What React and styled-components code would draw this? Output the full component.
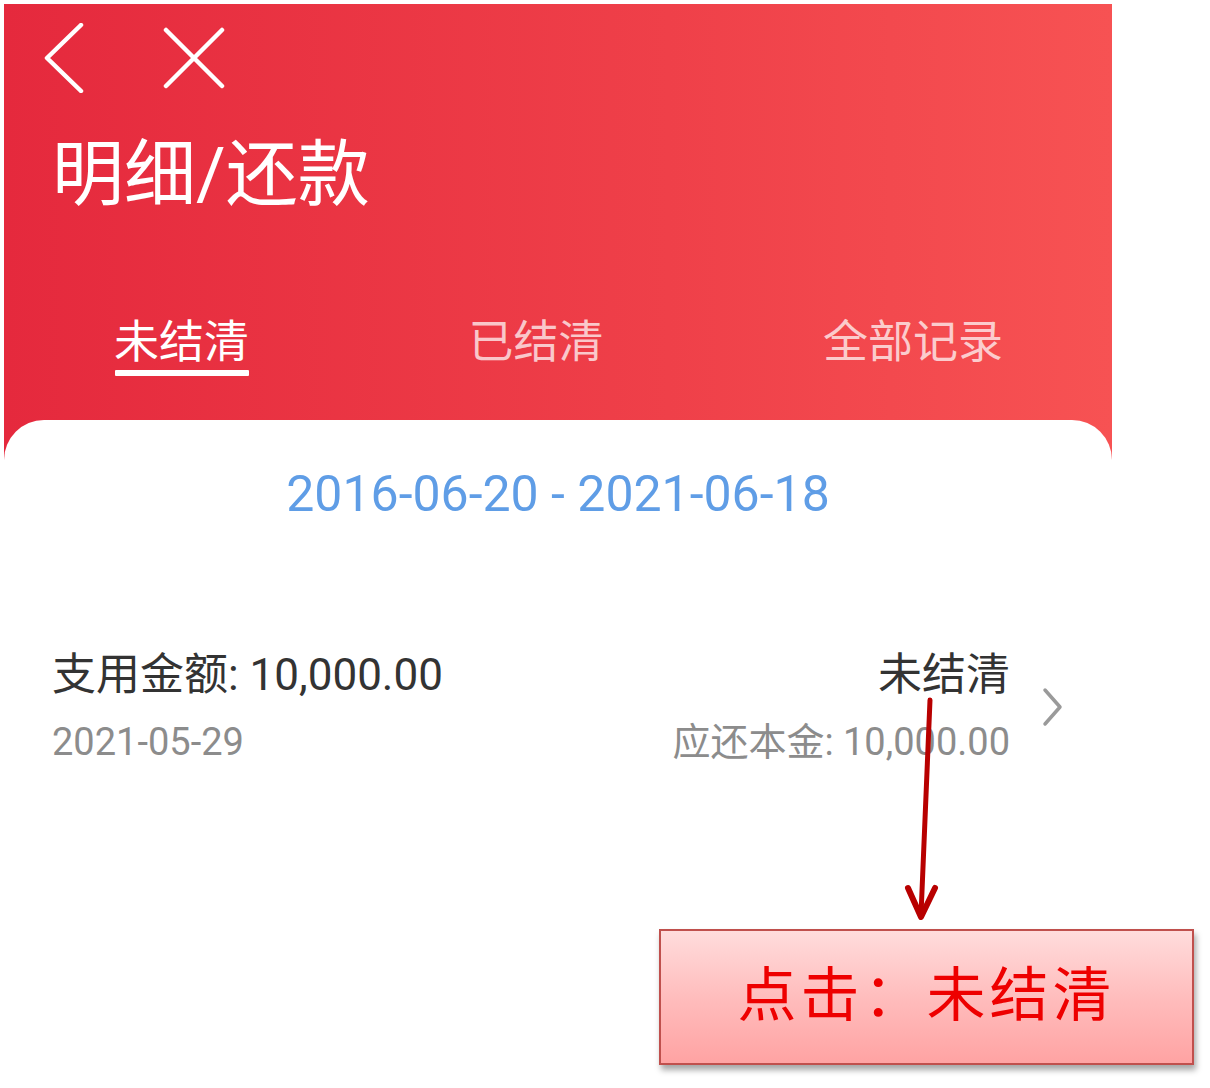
import React from 'react'
import styled, { createGlobalStyle } from 'styled-components'

const GlobalStyle = createGlobalStyle`
  html, body {
    margin: 0;
    padding: 0;
    background: #fff;
  }
  body {
    font-family: Roboto, "Noto Sans CJK SC", sans-serif;
  }
`

const Page = styled.div`
  position: relative;
  width: 1210px;
  min-height: 1088px;
  padding: 4px;
  box-sizing: border-box;
  background: #fff;
`

const Screen = styled.div`
  width: 1108px;
  display: flex;
  flex-direction: column;
`

const Header = styled.header`
  display: flex;
  flex-direction: column;
  background: linear-gradient(90deg, #e5293d 0%, #ef4049 60%, #f75253 100%);
  padding: 20px 0 85px;
`

const NavBar = styled.div`
  display: flex;
  align-items: center;
  gap: 78px;
  padding-left: 39px;
  height: 68px;
`

const IconButton = styled.button`
  display: flex;
  padding: 0;
  border: 0;
  background: none;
  cursor: pointer;
`

const Title = styled.h1`
  margin: 47px 0 0 48px;
  font-size: 72px;
  line-height: 72px;
  font-weight: 400;
  color: #fff;
`

const Tabs = styled.nav`
  display: flex;
  justify-content: space-between;
  padding: 0 109px 0 110px;
  margin-top: 109px;
`

const Tab = styled.div`
  display: flex;
  flex-direction: column;
  align-items: center;
  font-size: 45px;
  line-height: 45px;
  color: ${p => (p.$active ? '#fff' : 'rgba(255,255,255,0.72)')};
  cursor: pointer;

  &::after {
    content: '';
    display: block;
    width: 134px;
    height: 6px;
    margin-top: 5px;
    border-radius: 1px;
    background: ${p => (p.$active ? '#fff' : 'transparent')};
  }
`

const Card = styled.main`
  margin-top: -41px;
  background: #fff;
  border-radius: 40px 40px 0 0;
  padding-top: 49px;
  display: flex;
  flex-direction: column;
`

const DateRange = styled.div`
  text-align: center;
  font-size: 50px;
  line-height: 50px;
  color: #5f9de6;
`

const Row = styled.div`
  display: flex;
  align-items: center;
  margin-top: 134px;
  padding: 0 48px 0 48px;
`

const Col = styled.div`
  display: flex;
  flex-direction: column;
  gap: 26px;
  align-items: ${p => (p.$right ? 'flex-end' : 'flex-start')};
  flex: ${p => (p.$right ? '0 0 auto' : '1')};
`

const Primary = styled.div`
  font-size: 44px;
  line-height: 44px;
  color: #333;
`

const Secondary = styled.div`
  font-size: 38px;
  line-height: 38px;
  color: #8c8c8c;
`

const Chevron = styled.div`
  display: flex;
  margin-left: 32px;
`

const Arrow = styled.svg`
  position: absolute;
  left: 900px;
  top: 695px;
`

const Callout = styled.div`
  position: absolute;
  left: 659px;
  top: 929px;
  width: 535px;
  height: 136px;
  box-sizing: border-box;
  padding-bottom: 14px;
  border: 2px solid #c0504d;
  background: linear-gradient(180deg, #ffdcdc 0%, #ffbdbd 50%, #ffa3a3 100%);
  box-shadow: 2px 5px 6px rgba(0, 0, 0, 0.35);
  display: flex;
  align-items: center;
  justify-content: center;
  font-family: "Noto Sans CJK SC", serif;
  font-size: 59px;
  color: #ee0000;
  letter-spacing: 4px;
`

const BackIcon = () => (
  <svg width="42" height="70" viewBox="0 0 42 70">
    <path d="M38 2 L4 35 L38 68" fill="none" stroke="#fff" strokeWidth="4.5" strokeLinecap="round" strokeLinejoin="round" />
  </svg>
)

const CloseIcon = () => (
  <svg width="62" height="62" viewBox="0 0 62 62">
    <path d="M3 3 L59 59 M59 3 L3 59" fill="none" stroke="#fff" strokeWidth="4.5" strokeLinecap="round" />
  </svg>
)

const tabs = ['未结清', '已结清', '全部记录']

const App = () => {
  return (
    <Page>
      <GlobalStyle />
      <Screen>
        <Header>
          <NavBar>
            <IconButton><BackIcon /></IconButton>
            <IconButton><CloseIcon /></IconButton>
          </NavBar>
          <Title>明细/还款</Title>
          <Tabs>
            {tabs.map((t, i) => (
              <Tab key={t} $active={i === 0}>{t}</Tab>
            ))}
          </Tabs>
        </Header>
        <Card>
          <DateRange>2016-06-20 - 2021-06-18</DateRange>
          <Row>
            <Col>
              <Primary>支用金额: 10,000.00</Primary>
              <Secondary>2021-05-29</Secondary>
            </Col>
            <Col $right>
              <Primary>未结清</Primary>
              <Secondary>应还本金: 10,000.00</Secondary>
            </Col>
            <Chevron>
              <svg width="22" height="40" viewBox="0 0 22 40">
                <path d="M3 3 L18 20 L3 37" fill="none" stroke="#9a9a9a" strokeWidth="3.5" strokeLinecap="round" strokeLinejoin="round" />
              </svg>
            </Chevron>
          </Row>
        </Card>
      </Screen>

      <Arrow width="50" height="230" viewBox="0 0 50 230">
        <path d="M30 5 L21 220" fill="none" stroke="#b80000" strokeWidth="5" strokeLinecap="round" />
        <path d="M8 193 L21 222 L35 193" fill="none" stroke="#b80000" strokeWidth="6" strokeLinecap="round" strokeLinejoin="round" />
      </Arrow>
      <Callout>点击：未结清</Callout>
    </Page>
  )
}

export default App
